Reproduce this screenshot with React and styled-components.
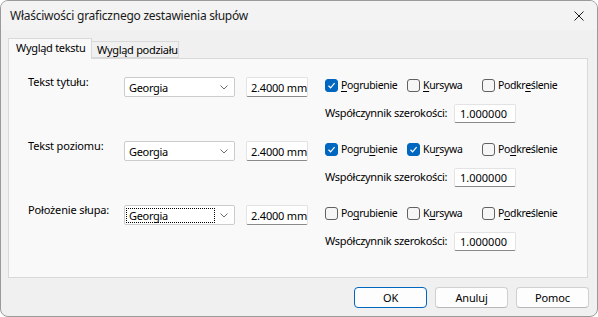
import React from 'react';
import styled, { createGlobalStyle } from 'styled-components';

const GlobalStyle = createGlobalStyle`
  html, body {
    margin: 0;
    padding: 0;
    background: #ffffff;
  }
  body {
    font-family: "Noto Sans", "Liberation Sans", sans-serif;
    font-size: 11px;
    letter-spacing: -0.15px;
    color: #000000;
  }
`;

const Window = styled.div`
  box-sizing: border-box;
  width: 598px;
  height: 317px;
  border: 1px solid #9a9a9a;
  border-radius: 8px;
  overflow: hidden;
  background: #f0f0f0;
  display: flex;
  flex-direction: column;
`;

const TitleBar = styled.div`
  height: 29px;
  flex: none;
  display: flex;
  align-items: center;
  justify-content: space-between;
  padding-left: 9px;
  background: #f3f3f3;
`;

const Title = styled.span`
  font-size: 12px;
  line-height: 16px;
  letter-spacing: -0.25px;
  color: #1a1a1a;
`;

const CloseButton = styled.div`
  width: 46px;
  height: 29px;
  display: flex;
  align-items: center;
  justify-content: center;
  margin-right: -5px;
`;

const Body = styled.div`
  flex: 1;
  display: flex;
  flex-direction: column;
  padding: 8px 9px 0 7px;
`;

const TabStrip = styled.div`
  display: flex;
  align-items: flex-end;
  height: 20px;
  position: relative;
  z-index: 1;
`;

const Tab = styled.div`
  box-sizing: border-box;
  height: ${(p) => (p.$active ? '21px' : '17px')};
  margin-bottom: ${(p) => (p.$active ? '-1px' : '0')};
  padding: ${(p) => (p.$active ? '1px 6px 0 7px' : '0 5px')};
  display: flex;
  align-items: ${(p) => (p.$active ? 'flex-start' : 'center')};
  background: ${(p) => (p.$active ? '#f9f9f9' : '#f0f0f0')};
  border: 1px solid #d9d9d9;
  border-bottom: ${(p) => (p.$active ? 'none' : '1px solid #d9d9d9')};
  border-left: ${(p) => (p.$active ? '1px solid #d9d9d9' : 'none')};
  width: ${(p) => p.$w}px;
  white-space: nowrap;
  line-height: 16px;
  letter-spacing: -0.3px;
`;

const Panel = styled.div`
  box-sizing: border-box;
  width: 580px;
  height: 220px;
  background: #f9f9f9;
  border: 1px solid #d9d9d9;
  padding: 18px 0 0 19px;
  display: flex;
  flex-direction: column;
  gap: 18px;
`;

const Block = styled.div`
  display: flex;
  flex-direction: column;
  gap: 7px;
`;

const Line = styled.div`
  display: flex;
  align-items: flex-start;
`;

const Label = styled.div`
  width: 96px;
  margin-top: -3px;
  line-height: 16px;
  white-space: nowrap;
`;

const Combo = styled.div`
  box-sizing: border-box;
  width: 111px;
  height: 20px;
  background: #ffffff;
  border: 1px solid #cccccc;
  border-radius: 2px;
  display: flex;
  align-items: center;
  justify-content: space-between;
  padding: 0 6px 0 1px;
`;

const ComboText = styled.span`
  box-sizing: border-box;
  display: flex;
  align-items: center;
  width: 89px;
  height: 15px;
  padding-left: 2px;
  letter-spacing: -0.3px;
  border: 1px dotted ${(p) => (p.$focused ? '#000000' : 'transparent')};
`;

const NumberBox = styled.div`
  box-sizing: border-box;
  width: 62px;
  height: 20px;
  margin-left: 11px;
  background: #ffffff;
  border: 1px solid #e3e3e3;
  border-bottom-color: #8a8a8a;
  border-radius: 2px;
  display: flex;
  align-items: center;
  padding-left: 4px;
  white-space: nowrap;
  letter-spacing: -0.2px;
`;

const Checks = styled.div`
  display: flex;
  margin-left: 17px;
  margin-top: 1px;
`;

const CheckItem = styled.label`
  display: flex;
  align-items: center;
  gap: 3px;
  width: ${(p) => p.$w}px;
  font-size: 10.5px;
  letter-spacing: -0.35px;
  line-height: 14px;
  white-space: nowrap;
`;

const Box = styled.span`
  box-sizing: border-box;
  flex: none;
  width: 13px;
  height: 13px;
  border-radius: 3px;
  border: 1px solid ${(p) => (p.$checked ? '#0067c0' : '#616161')};
  background: ${(p) => (p.$checked ? '#0067c0' : '#f6f6f6')};
  display: flex;
  align-items: center;
  justify-content: center;
`;

const Key = styled.span`
  text-decoration: underline;
  text-underline-offset: 2px;
`;

const FactorLine = styled.div`
  display: flex;
  align-items: center;
  margin-left: 297px;
`;

const FactorLabel = styled.span`
  width: 129px;
  white-space: nowrap;
  margin-top: -2px;
  letter-spacing: -0.3px;
`;

const FactorBox = styled.div`
  box-sizing: border-box;
  width: 62px;
  height: 19px;
  background: #ffffff;
  border: 1px solid #e3e3e3;
  border-bottom-color: #8a8a8a;
  border-radius: 2px;
  display: flex;
  align-items: center;
  padding-left: 5px;
  letter-spacing: 0;
`;

const Footer = styled.div`
  display: flex;
  justify-content: flex-end;
  gap: 8px;
  margin-top: 9px;
  margin-right: -1px;
`;

const Button = styled.div`
  box-sizing: border-box;
  width: 73px;
  height: 21px;
  border-radius: 4px;
  background: #fdfdfd;
  border: 1px solid ${(p) => (p.$primary ? '#0067c0' : '#d0d0d0')};
  border-bottom-color: ${(p) => (p.$primary ? '#0067c0' : '#b8b8b8')};
  display: flex;
  align-items: center;
  justify-content: center;
`;

const Chevron = () => (
  <svg width="8" height="5" viewBox="0 0 8 5">
    <polyline points="0.5,0.5 4,4 7.5,0.5" fill="none" stroke="#6a6a6a" strokeWidth="1" />
  </svg>
);

const Check = () => (
  <svg width="9" height="9" viewBox="0 0 9 9">
    <polyline points="1.5,4.8 3.6,6.8 7.6,2.2" fill="none" stroke="#ffffff" strokeWidth="1.2" />
  </svg>
);

const CloseIcon = () => (
  <svg width="10" height="10" viewBox="0 0 10 10">
    <path d="M0.5 0.5 L9.5 9.5 M9.5 0.5 L0.5 9.5" stroke="#1a1a1a" strokeWidth="1" />
  </svg>
);

// split a label so that one letter gets the accelerator underline
const Accel = ({ text, at }) => (
  <span>
    {text.slice(0, at)}
    <Key>{text[at]}</Key>
    {text.slice(at + 1)}
  </span>
);

const CheckBox = ({ w, checked, text, at }) => (
  <CheckItem $w={w}>
    <Box $checked={checked}>{checked && <Check />}</Box>
    <Accel text={text} at={at} />
  </CheckItem>
);

const rows = [
  {
    label: 'Tekst tytułu:',
    bold: [true, 0],
    italic: [false, 0],
    under: [false, 5],
  },
  {
    label: 'Tekst poziomu:',
    bold: [true, 5],
    italic: [true, 2],
    under: [false, 2],
  },
  {
    label: 'Położenie słupa:',
    bold: [false, 2],
    italic: [false, 1],
    under: [false, 1],
    focused: true,
  },
];

export default function App() {
  return (
    <>
      <GlobalStyle />
      <Window>
        <TitleBar>
          <Title>Właściwości graficznego zestawienia słupów</Title>
          <CloseButton>
            <CloseIcon />
          </CloseButton>
        </TitleBar>
        <Body>
          <TabStrip>
            <Tab $active $w={84}>Wygląd tekstu</Tab>
            <Tab $w={87}>Wygląd podziału</Tab>
          </TabStrip>
          <Panel>
            {rows.map((r) => (
              <Block key={r.label}>
                <Line>
                  <Label>{r.label}</Label>
                  <Combo>
                    <ComboText $focused={r.focused}>Georgia</ComboText>
                    <Chevron />
                  </Combo>
                  <NumberBox>2.4000 mm</NumberBox>
                  <Checks>
                    <CheckBox w={82} checked={r.bold[0]} text="Pogrubienie" at={r.bold[1]} />
                    <CheckBox w={75} checked={r.italic[0]} text="Kursywa" at={r.italic[1]} />
                    <CheckBox w={90} checked={r.under[0]} text="Podkreślenie" at={r.under[1]} />
                  </Checks>
                </Line>
                <FactorLine>
                  <FactorLabel>Współczynnik szerokości:</FactorLabel>
                  <FactorBox>1.000000</FactorBox>
                </FactorLine>
              </Block>
            ))}
          </Panel>
          <Footer>
            <Button $primary>OK</Button>
            <Button>Anuluj</Button>
            <Button>Pomoc</Button>
          </Footer>
        </Body>
      </Window>
    </>
  );
}
